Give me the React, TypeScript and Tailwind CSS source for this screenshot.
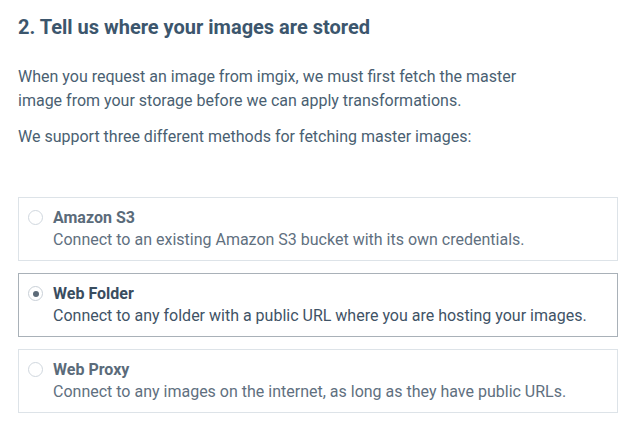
import React from "react";

const options = [
  {
    title: "Amazon S3",
    desc: "Connect to an existing Amazon S3 bucket with its own credentials.",
    selected: false,
  },
  {
    title: "Web Folder",
    desc: "Connect to any folder with a public URL where you are hosting your images.",
    selected: true,
  },
  {
    title: "Web Proxy",
    desc: "Connect to any images on the internet, as long as they have public URLs.",
    selected: false,
  },
];

export default function App() {
  return (
    <div
      className="w-[640px] h-[434px] bg-white overflow-hidden pl-[18px] pt-[13px]"
      style={{ fontFamily: "Roboto, 'Liberation Sans', sans-serif" }}
    >
      <h2 className="text-[20px] leading-[28px] font-bold text-[#3c566d]">
        2. Tell us where your images are stored
      </h2>
      <p className="mt-[24px] text-[16px] leading-[24px] text-[#4a5f72]">
        When you request an image from imgix, we must first fetch the master
        <br />
        image from your storage before we can apply transformations.
      </p>
      <p className="mt-[12px] text-[16px] leading-[24px] text-[#4a5f72]">
        We support three different methods for fetching master images:
      </p>
      <div className="mt-[48px] flex flex-col gap-[12px] w-[600px]">
        {options.map((o) => (
          <div
            key={o.title}
            className={
              o.selected
                ? "flex border border-[#a9b1b8] pl-[9px] py-[9px]"
                : "flex border border-[#dde3e8] pl-[9px] py-[9px]"
            }
          >
            <div className="pt-[3px]">
              {o.selected ? (
                <div className="w-[15px] h-[15px] rounded-full border border-[#c9d0d7] bg-white flex items-center justify-center">
                  <div className="w-[6px] h-[6px] rounded-full bg-[#5d6b78]" />
                </div>
              ) : (
                <div className="w-[15px] h-[15px] rounded-full border border-[#d0d7de] bg-white" />
              )}
            </div>
            <div className="ml-[10px]">
              <div
                className={
                  o.selected
                    ? "text-[16px] leading-[22px] font-bold text-[#3a4d5f]"
                    : "text-[16px] leading-[22px] font-bold text-[#5b6b7a]"
                }
              >
                {o.title}
              </div>
              <div
                className={
                  o.selected
                    ? "text-[16px] leading-[22px] text-[#3f5366]"
                    : "text-[16px] leading-[22px] text-[#5f7080]"
                }
              >
                {o.desc}
              </div>
            </div>
          </div>
        ))}
      </div>
    </div>
  );
}
